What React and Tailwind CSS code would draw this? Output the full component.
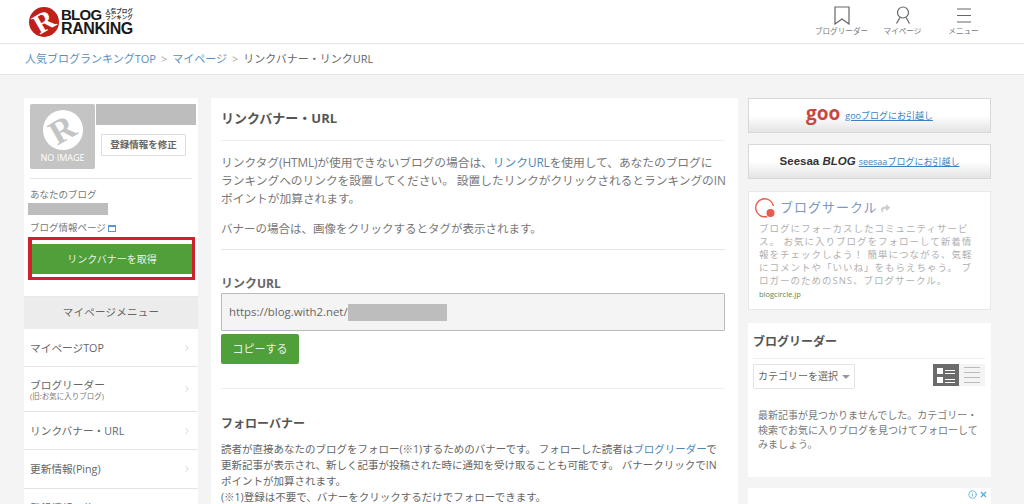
import { ChevronRight, X, Info } from 'lucide-react'
import { FaShare } from 'react-icons/fa'

const sans = 'font-["Open_Sans","Noto_Sans_CJK_JP",sans-serif]'

function Logo() {
    return (
        <div className="flex items-center">
            <div className="w-[30px] h-[30px] rounded-full bg-[#c0201a] flex items-center justify-center overflow-hidden shrink-0">
                <span className='text-white font-["Liberation_Serif"] font-bold text-[28px] leading-none -rotate-[30deg]'>R</span>
            </div>
            <div className="ml-[2px] w-[74px] shrink-0">
                <div className="flex items-center h-[14px]">
                    <span className='font-["Liberation_Sans"] font-bold text-[15px] leading-none text-[#1a1a1a] tracking-tighter'>BLOG</span>
                    <span className="ml-[4px] text-[5.5px] leading-[6.5px] font-bold text-[#333] whitespace-nowrap shrink-0">人気ブログ<br />ランキング</span>
                </div>
                <div className='font-["Liberation_Sans"] font-bold text-[16px] leading-[15px] text-[#1a1a1a] tracking-tight whitespace-nowrap'>RANKING</div>
            </div>
        </div>
    )
}

function HeaderLink({ icon, label }) {
    return (
        <div className="flex flex-col items-center w-[61px]">
            {icon}
            <span className="text-[7.6px] leading-[12px] text-[#777] whitespace-nowrap">{label}</span>
        </div>
    )
}

function MenuRow({ label, sub, height }) {
    return (
        <div className={`bg-white border-b border-[#e4e4e4] flex items-center justify-between pl-[6px] pr-[6px] ${height}`}>
            <div>
                <div className="text-[10.7px] leading-[14px] text-[#666]">{label}</div>
                {sub && <div className="text-[7.5px] leading-[8px] text-[#777]">{sub}</div>}
            </div>
            <ChevronRight className="w-[10px] h-[10px] text-[#bbb]" strokeWidth={1.5} />
        </div>
    )
}

function MoveBanner({ logo, label, gap }) {
    return (
        <div className={`h-[35px] border border-[#d8d8d8] bg-gradient-to-b from-white via-white to-[#e4e4e4] flex items-center justify-center ${gap}`}>
            {logo}
            <a className="text-[9px] text-[#3f7fc1] underline">{label}</a>
        </div>
    )
}

function Sidebar() {
    return (
        <aside className="w-[174px] shrink-0">
            <div className="bg-white h-[199px] px-[6px] pt-[6px] border-b border-[#e8e8e8]">
                <div className="flex">
                    <div className="w-[65px] h-[65px] rounded-[2px] bg-[#c4c4c4] flex flex-col items-center overflow-hidden">
                        <div className="mt-[6px] w-[40px] h-[40px] rounded-full bg-white flex items-center justify-center overflow-hidden">
                            <span className='font-["Liberation_Serif"] font-bold text-[34px] leading-none text-[#c4c4c4] -rotate-[30deg]'>R</span>
                        </div>
                        <span className="text-[9px] leading-[12px] text-white mt-[2px]">NO IMAGE</span>
                    </div>
                    <div className="flex-1">
                        <div className="h-[21px] bg-[#bdbdbd] -mr-[4px] ml-[1px]"></div>
                        <button className="mt-[9px] ml-[6px] w-[85px] h-[22px] border border-[#ddd] rounded-[1px] bg-white text-[9.5px] font-bold text-[#666]">登録情報を修正</button>
                    </div>
                </div>
                <div className="border-t border-[#e4e4e4] mt-[9px]"></div>
                <div className="text-[9.5px] leading-[12px] text-[#777] mt-[10px]">あなたのブログ</div>
                <div className="w-[80px] h-[12px] bg-[#bdbdbd] -ml-[2px] mt-[2px]"></div>
                <div className="flex items-center text-[9.5px] leading-[12px] text-[#777] mt-[7px]">
                    ブログ情報ページ
                    <span className="ml-[2px] w-[8px] h-[7px] border border-[#5a96d0] border-t-2"></span>
                </div>
                <div className="mt-[3px] -ml-[2px] -mr-[3px] border-[3px] border-l-[4px] border-[#d0202c] h-[43px] pt-[4px] pb-[3px] bg-white">
                    <div className="h-full bg-[#4f9f3a] flex items-center justify-center text-[10px] text-[#e8f3e4]">リンクバナーを取得</div>
                </div>
            </div>
            <div className="h-[32px] bg-[#ececec] flex items-center justify-center text-[10.5px] text-[#666] tracking-wide">マイページメニュー</div>
            <MenuRow label="マイページTOP" height="h-[38px]" />
            <MenuRow label="ブログリーダー" sub="(旧:お気に入りブログ)" height="h-[45px]" />
            <MenuRow label="リンクバナー・URL" height="h-[38px]" />
            <MenuRow label="更新情報(Ping)" height="h-[39px]" />
            <MenuRow label="登録情報の修正" height="h-[38px]" />
        </aside>
    )
}

function Content() {
    return (
        <main className="w-[527px] shrink-0 ml-[13px] bg-white pl-[10px] pr-[13px] h-[420px] overflow-hidden">
            <h1 className="text-[13px] leading-[18px] font-bold text-[#555] pt-[11px]">リンクバナー・URL</h1>
            <div className="border-t border-[#eee] mt-[13px]"></div>
            <p className="text-[11.8px] leading-[18px] text-[#777] mt-[12px] -mr-[3px] tracking-[-0.1px]">
                リンクタグ(HTML)が使用できないブログの場合は、<a className="text-[#4d87b8]">リンクURL</a>を使用して、あなたのブログに<br />ランキングへのリンクを設置してください。 設置したリンクがクリックされるとランキングのINポイントが加算されます。
            </p>
            <p className="text-[11.5px] leading-[18px] text-[#777] mt-[13px]">バナーの場合は、画像をクリックするとタグが表示されます。</p>
            <div className="border-t border-[#e8e8e8] mt-[11px]"></div>
            <h2 className="text-[12px] leading-[16px] font-bold text-[#666] mt-[26px]">リンクURL</h2>
            <div className="mt-[1px] h-[38px] bg-[#f4f4f4] border border-[#bbb] rounded-[1px] flex items-center pl-[7px] text-[11.4px] text-[#666]">
                https://blog.with2.net/
                <span className="w-[99px] h-[17px] bg-[#bdbdbd]"></span>
            </div>
            <button className="mt-[3px] block w-[78px] h-[30px] bg-[#4f9f3a] rounded-[2px] text-[11px] text-[#e8f3e4]">コピーする</button>
            <div className="border-t border-[#eee] mt-[24px]"></div>
            <h2 className="text-[12px] leading-[16px] font-bold text-[#555] mt-[27px]">フォローバナー</h2>
            <p className="text-[10.5px] leading-[16px] text-[#666] mt-[9px]">
                読者が直接あなたのブログをフォロー(※1)するためのバナーです。 フォローした読者は<a className="text-[#4d87b8]">ブログリーダー</a>で更新記事が表示され、新しく記事が投稿された時に通知を受け取ることも可能です。 バナークリックでINポイントが加算されます。<br />
                (※1)登録は不要で、バナーをクリックするだけでフォローできます。
            </p>
        </main>
    )
}

function RightColumn() {
    return (
        <aside className="w-[243px] shrink-0 ml-[10px] flex flex-col">
            <MoveBanner
                label="gooブログにお引越し"
                gap="gap-[5px]"
                logo={<span className='font-["Open_Sans"] font-bold text-[19px] leading-none text-[#c8483f] -mt-[4px]'>goo</span>}
            />
            <div className="mt-[11px]">
                <MoveBanner
                    label="seesaaブログにお引越し"
                    gap="gap-[3px]"
                    logo={<span className='font-["Liberation_Sans"] font-bold text-[11.5px] text-[#333] whitespace-nowrap'>Seesaa <i>BLOG</i></span>}
                />
            </div>
            <div className="mt-[12px] h-[119px] bg-white border border-[#e8e8e8] pl-[11px] pr-[10px]">
                <div className="flex items-center pt-[5px] -ml-[6px]">
                    <svg width="22" height="22" viewBox="0 0 22 22" fill="none">
                        <path d="M13 19.5A9 9 0 1 1 19.5 9" stroke="#e9594c" strokeWidth="1.4" />
                        <circle cx="16.5" cy="16" r="4" fill="#e9594c" />
                    </svg>
                    <span className="ml-[4px] text-[13px] tracking-[1px] text-[#7c98c0]">ブログサークル</span>
                    <FaShare className="w-[9px] h-[9px] ml-[3px] text-[#ccc]" />
                </div>
                <p className="mt-[3px] text-[9.5px] leading-[13px] tracking-[1px] text-[#b0b0b0] -ml-[1px]">
                    ブログにフォーカスしたコミュニティサービス。 お気に入りブログをフォローして新着情報をチェックしよう！ 簡単につながる、気軽にコメントや「いいね」をもらえちゃう。 ブロガーのためのSNS、ブログサークル。
                </p>
                <div className="text-[7.5px] leading-[12px] mt-[1px] text-[#4f8a4f] -ml-[1px]">blogcircle.jp</div>
            </div>
            <div className="mt-[13px] h-[154px] bg-white pl-[5px] pr-[6px]">
                <h3 className="text-[12px] leading-[16px] font-bold text-[#555] pt-[11px] h-[35px]">ブログリーダー</h3>
                <div className="border-t border-[#f0f0f0]"></div>
                <div className="flex items-start justify-between mt-[5px]">
                    <button className="w-[102px] h-[25px] border border-[#e4e4e4] rounded-[1px] text-[10px] text-[#666] flex items-center justify-center gap-[4px]">
                        カテゴリーを選択
                        <span className="w-0 h-0 border-x-[4px] border-x-transparent border-t-[4px] border-t-[#999] mt-[1px]"></span>
                    </button>
                    <div className="flex">
                        <div className="w-[26px] h-[22px] bg-[#6b6b6b] flex flex-col justify-center gap-[3px] px-[4px]">
                            <div className="flex gap-[2px] items-center"><span className="w-[6px] h-[6px] bg-white"></span><span className="flex-1 h-[1px] bg-white shadow-[0_3px_0_white]"></span></div>
                            <div className="flex gap-[2px] items-center"><span className="w-[6px] h-[6px] bg-white"></span><span className="flex-1 h-[1px] bg-white shadow-[0_3px_0_white]"></span></div>
                        </div>
                        <div className="w-[26px] h-[22px] bg-[#f4f4f4] flex flex-col justify-center gap-[4px] px-[5px]">
                            <span className="h-[1px] bg-[#bbb]"></span>
                            <span className="h-[1px] bg-[#bbb]"></span>
                            <span className="h-[1px] bg-[#bbb]"></span>
                            <span className="h-[1px] bg-[#bbb]"></span>
                        </div>
                    </div>
                </div>
                <p className="text-[10px] leading-[14.5px] text-[#777] mt-[19px] px-[5px]">
                    最新記事が見つかりませんでした。カテゴリー・検索でお気に入りブログを見つけてフォローしてみましょう。
                </p>
            </div>
            <div className="mt-[11px] h-[30px] bg-white flex justify-end gap-[2px] pt-[2px] pr-[3px] text-[#4aa8d8]">
                <Info className="w-[9px] h-[9px]" />
                <X className="w-[9px] h-[9px]" strokeWidth={3} />
            </div>
        </aside>
    )
}

export default function App() {
    return (
        <div className={`h-[504px] overflow-hidden bg-[#f4f4f4] ${sans}`}>
            <header className="h-[44px] bg-white border-b border-[#e6e6e6] flex items-center justify-between pl-[29px] pr-[30px]">
                <Logo />
                <div className="flex self-start pt-[6px]">
                    <HeaderLink
                        label="ブログリーダー"
                        icon={
                            <svg width="20" height="19" viewBox="0 0 20 19" fill="none" stroke="#666" strokeWidth="1.2">
                                <path d="M3 1H17V18L10 13L3 18Z" />
                            </svg>
                        }
                    />
                    <HeaderLink
                        label="マイページ"
                        icon={
                            <svg width="20" height="19" viewBox="0 0 20 19" fill="none" stroke="#666" strokeWidth="1.2">
                                <circle cx="10" cy="6.5" r="5.5" />
                                <path d="M7 11.5L3.5 17.5M13 11.5L16.5 17.5" />
                            </svg>
                        }
                    />
                    <HeaderLink
                        label="メニュー"
                        icon={
                            <svg width="20" height="19" viewBox="0 0 20 19" fill="none" stroke="#666" strokeWidth="1.1">
                                <path d="M3 3H17M3 9.5H17M3 16H17" />
                            </svg>
                        }
                    />
                </div>
            </header>
            <nav className="h-[31px] bg-white border-b border-[#e6e6e6] flex items-center pl-[25px] text-[11px] text-[#666] gap-[5px]">
                <a className="text-[#5b8ec0]">人気ブログランキングTOP</a>
                <span className="text-[#aaa]">&gt;</span>
                <a className="text-[#5b8ec0]">マイページ</a>
                <span className="text-[#aaa]">&gt;</span>
                <span>リンクバナー・リンクURL</span>
            </nav>
            <div className="flex pl-[24px] pt-[23px]">
                <Sidebar />
                <Content />
                <RightColumn />
            </div>
        </div>
    )
}
